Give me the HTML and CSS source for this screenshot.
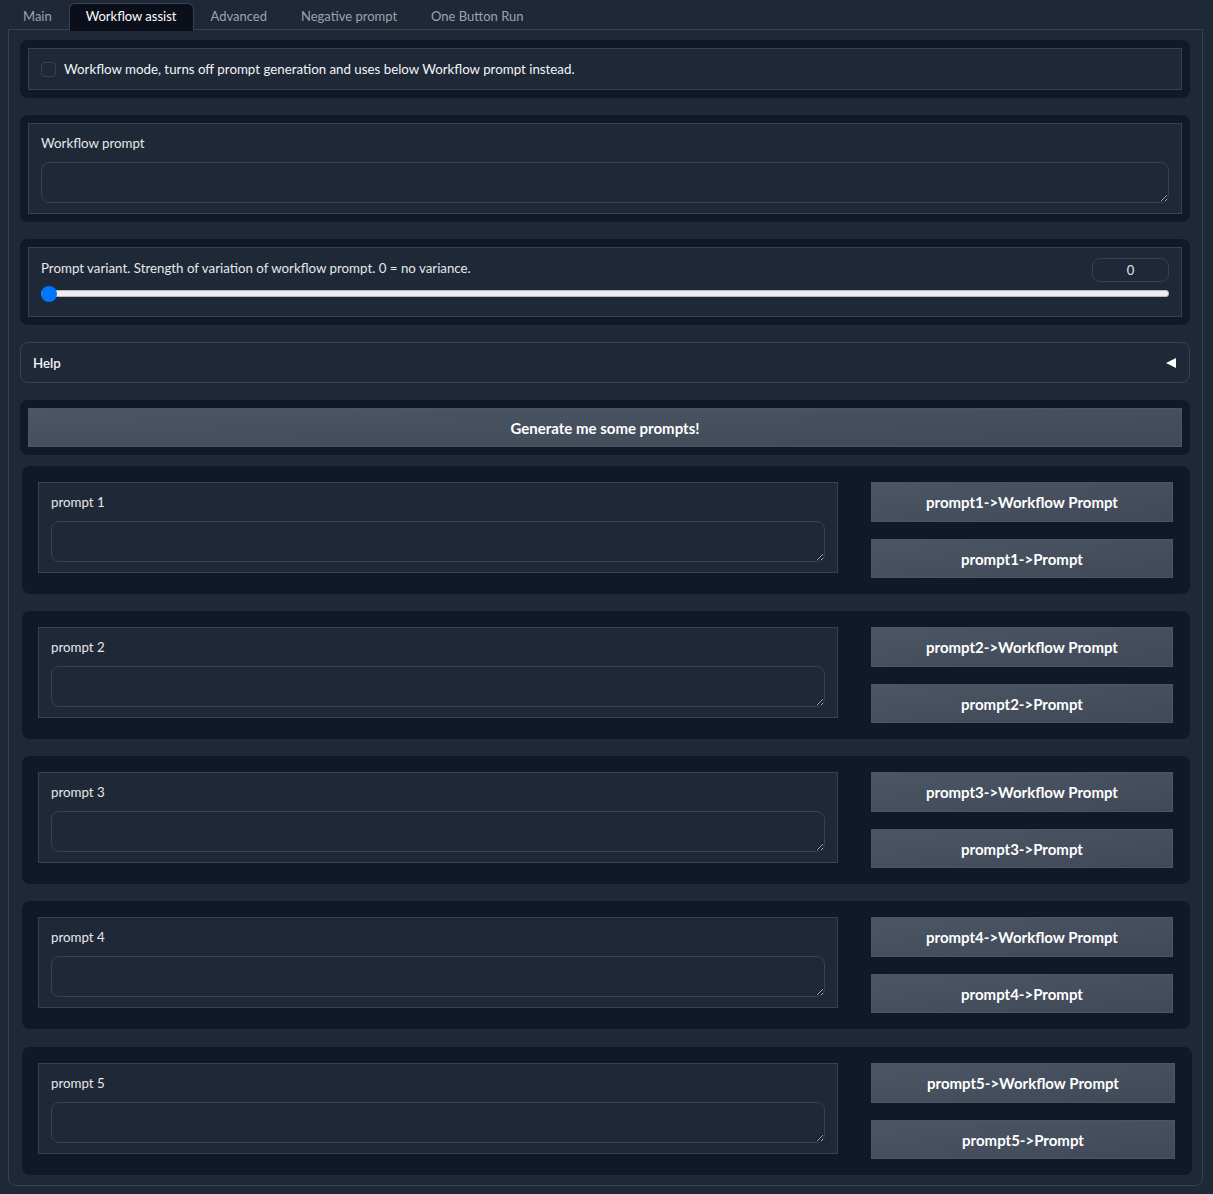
FILE: index.html
```html
<!DOCTYPE html>
<html>
<head>
<meta charset="utf-8">
<link rel="stylesheet" href="styles.css">
</head>
<body>
<div class="tabs">
  <div class="tab-nav">
    <button class="tab">Main</button>
    <button class="tab selected">Workflow assist</button>
    <button class="tab">Advanced</button>
    <button class="tab">Negative prompt</button>
    <button class="tab">One Button Run</button>
  </div>
  <div class="tab-content">
    <div class="stack">
      <div class="group">
        <label class="block check-block">
          <span class="checkbox"></span>
          <span class="check-label">Workflow mode, turns off prompt generation and uses below Workflow prompt instead.</span>
        </label>
      </div>
      <div class="group">
        <div class="block text-block">
          <div class="label">Workflow prompt</div>
          <textarea class="textarea"></textarea>
        </div>
      </div>
      <div class="group">
        <div class="block slider-block">
          <div class="slider-head">
            <span class="label">Prompt variant. Strength of variation of workflow prompt. 0 = no variance.</span>
            <span class="number">0</span>
          </div>
          <div class="slider">
            <div class="track"></div>
            <div class="thumb"></div>
          </div>
        </div>
      </div>
      <div class="accordion">
        <span class="acc-title">Help</span>
        <span class="acc-icon"></span>
      </div>
      <div class="group">
        <button class="btn btn-wide">Generate me some prompts!</button>
      </div>
    </div>
    <div class="stack prompts">
      <div class="prompt-row">
        <div class="block text-block">
          <div class="label">prompt 1</div>
          <textarea class="textarea"></textarea>
        </div>
        <div class="btn-col">
          <button class="btn">prompt1-&gt;Workflow Prompt</button>
          <button class="btn">prompt1-&gt;Prompt</button>
        </div>
      </div>
      <div class="prompt-row">
        <div class="block text-block">
          <div class="label">prompt 2</div>
          <textarea class="textarea"></textarea>
        </div>
        <div class="btn-col">
          <button class="btn">prompt2-&gt;Workflow Prompt</button>
          <button class="btn">prompt2-&gt;Prompt</button>
        </div>
      </div>
      <div class="prompt-row">
        <div class="block text-block">
          <div class="label">prompt 3</div>
          <textarea class="textarea"></textarea>
        </div>
        <div class="btn-col">
          <button class="btn">prompt3-&gt;Workflow Prompt</button>
          <button class="btn">prompt3-&gt;Prompt</button>
        </div>
      </div>
      <div class="prompt-row">
        <div class="block text-block">
          <div class="label">prompt 4</div>
          <textarea class="textarea"></textarea>
        </div>
        <div class="btn-col">
          <button class="btn">prompt4-&gt;Workflow Prompt</button>
          <button class="btn">prompt4-&gt;Prompt</button>
        </div>
      </div>
      <div class="prompt-row last">
        <div class="block text-block">
          <div class="label">prompt 5</div>
          <textarea class="textarea"></textarea>
        </div>
        <div class="btn-col">
          <button class="btn">prompt5-&gt;Workflow Prompt</button>
          <button class="btn">prompt5-&gt;Prompt</button>
        </div>
      </div>
    </div>
  </div>
</div>
</body>
</html>
```
FILE: styles.css
```css
* { box-sizing: border-box; }
html, body {
  margin: 0;
  padding: 0;
  background: #1f2837;
  color: #e5e7eb;
  font-family: Lato, "Noto Sans", sans-serif;
  font-size: 13.3px;
}
.tabs {
  padding: 0 10px 0 6px;
}
.tab-nav {
  display: flex;
  height: 30px;
  padding-top: 3px;
  position: relative;
  z-index: 1;
}
.tab {
  font-family: inherit;
  font-size: 13px;
  color: #9ca3af;
  background: transparent;
  border: 1px solid transparent;
  border-bottom: none;
  padding: 0 16px 2px;
  height: 27px;
  line-height: 23px;
  margin: 0;
  border-radius: 6px 6px 0 0;
  cursor: pointer;
}
.tab.selected {
  background: #0b0f19;
  color: #ffffff;
  border-color: #374151;
  height: 28px;
  margin-bottom: -1px;
}
.tab-content {
  border: 1px solid #374151;
  border-radius: 0 0 8px 8px;
  padding: 10px 12px 10px 11px;
  margin-top: -1px;
  margin-left: 2px;
}
.stack {
  display: flex;
  flex-direction: column;
  gap: 17px;
}
.prompts {
  margin-top: 11px;
  padding-left: 2px;
}
.group {
  background: #111827;
  border-radius: 8px;
  padding: 8px;
}
.block {
  background: #1f2837;
  border: 1px solid #374151;
}
.check-block {
  display: flex;
  align-items: center;
  height: 42px;
  padding: 0 12px;
  gap: 8px;
}
.checkbox {
  width: 15px;
  height: 15px;
  border: 1px solid #374151;
  border-radius: 4px;
  background: #1f2837;
  flex: none;
}
.check-label {
  color: #f3f4f6;
}
.text-block {
  padding: 9px 12px 10px;
  display: flex;
  flex-direction: column;
}
.label {
  line-height: 20px;
  color: #e5e7eb;
}
.textarea {
  display: block;
  width: 100%;
  height: 41px;
  margin-top: 9px;
  background: #1f2837;
  border: 1px solid #374151;
  border-radius: 8px;
  resize: vertical;
  color: #e5e7eb;
  font-family: inherit;
  outline: none;
}
.slider-block {
  padding: 10px 12px 14px;
}
.slider-head {
  display: flex;
  justify-content: space-between;
  align-items: flex-start;
  height: 24px;
}
.number {
  width: 77px;
  height: 24px;
  border: 1px solid #374151;
  border-radius: 8px;
  text-align: center;
  line-height: 22px;
  font-size: 13px;
  color: #e5e7eb;
}
.slider {
  position: relative;
  height: 16px;
  margin-top: 4px;
}
.track {
  position: absolute;
  left: 0;
  right: 0;
  top: 4px;
  height: 7px;
  background: #efefef;
  border: 1px solid #b9b9b9;
  border-radius: 3px;
}
.thumb {
  position: absolute;
  left: 0;
  top: 0;
  width: 16px;
  height: 16px;
  border-radius: 50%;
  background: #0075ff;
}
.accordion {
  display: flex;
  justify-content: space-between;
  align-items: center;
  height: 41px;
  border: 1px solid #374151;
  border-radius: 8px;
  padding: 0 13px 0 12px;
}
.acc-title {
  font-weight: 600;
  color: #f3f4f6;
}
.acc-icon {
  width: 0;
  height: 0;
  border-top: 5.5px solid transparent;
  border-bottom: 5.5px solid transparent;
  border-right: 10px solid #ffffff;
}
.btn {
  font-family: inherit;
  font-weight: 700;
  font-size: 15px;
  color: #ffffff;
  background: linear-gradient(to bottom right, #4b5563, #414958);
  border: 1px solid #4b5563;
  border-radius: 0;
  height: 40px;
  padding: 0 12px;
  cursor: pointer;
}
.btn-col .btn:last-child {
  height: 39px;
}
.btn-wide {
  width: 100%;
  height: 39px;
  display: block;
}
.prompt-row {
  background: #111827;
  border-radius: 8px;
  padding: 16px 17px 16px 16px;
  display: grid;
  grid-template-columns: 800px 1fr;
  column-gap: 33px;
  align-items: start;
}
.prompt-row.last {
  margin-top: 1px;
  margin-right: -2px;
}
.btn-col {
  display: flex;
  flex-direction: column;
  gap: 17px;
}
```
